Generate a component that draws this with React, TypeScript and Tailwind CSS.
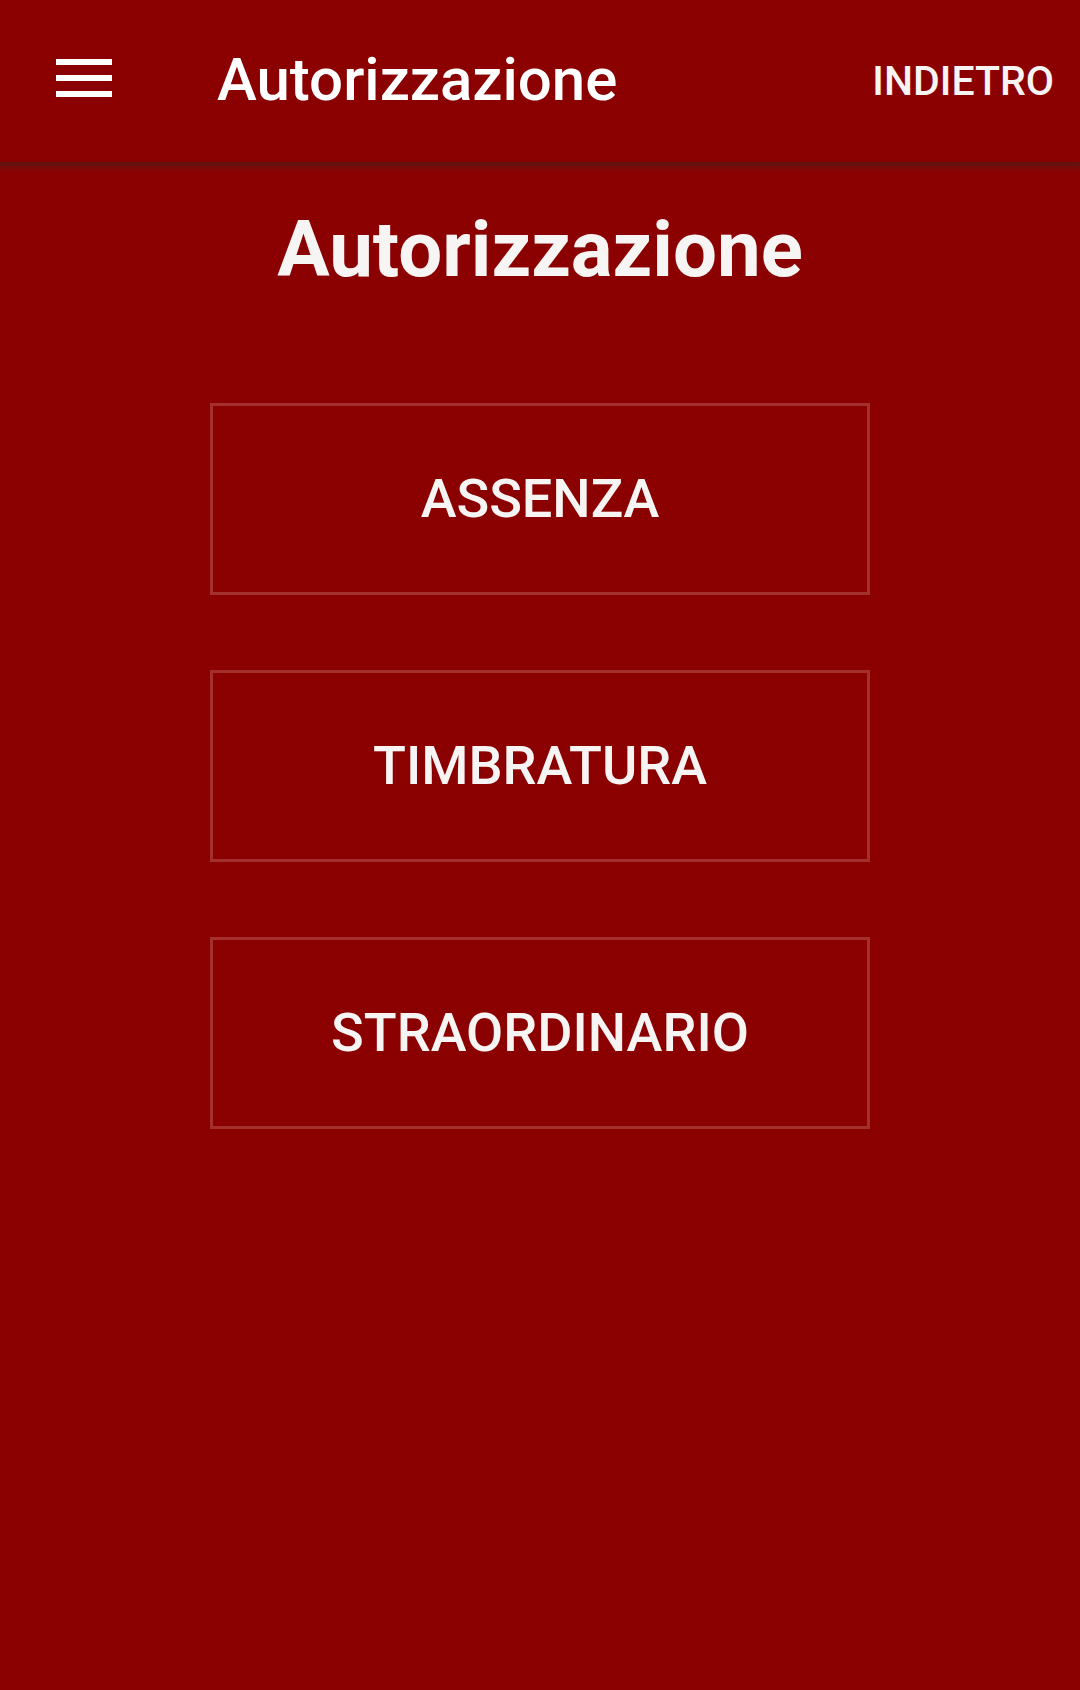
const actions = ["ASSENZA", "TIMBRATURA", "STRAORDINARIO"]

export default function App() {
  return (
    <div className="min-h-[1690px] w-[1080px] bg-[#8b0000] font-['Roboto',sans-serif] text-[#f7f4f4]">
      <header className="flex h-[162px] items-center bg-[#8b0000]">
        <button className="ml-[56px] mb-[6px] flex w-[56px] flex-col gap-[10px]" aria-label="menu">
          <span className="block h-[6px] w-full bg-white" />
          <span className="block h-[6px] w-full bg-white" />
          <span className="block h-[6px] w-full bg-white" />
        </button>
        <h1 className="ml-[105px] mb-[2px] text-[60px] font-medium leading-none text-white">Autorizzazione</h1>
        <button className="ml-auto mr-[26px] text-[41px] font-medium leading-none">INDIETRO</button>
      </header>
      <div className="h-[10px] bg-gradient-to-b from-[#5e1212] to-[#8b0000]" />

      <main className="flex flex-col items-center">
        <h2 className="mt-[39px] text-[78px] font-bold leading-none">Autorizzazione</h2>

        <div className="mt-[114px] flex flex-col gap-[75px]">
          {actions.map((label) => (
            <button
              key={label}
              className="flex h-[192px] w-[660px] items-center justify-center border-[3px] border-[#a3302c] text-[54px] font-medium leading-none"
            >
              {label}
            </button>
          ))}
        </div>
      </main>
    </div>
  )
}
